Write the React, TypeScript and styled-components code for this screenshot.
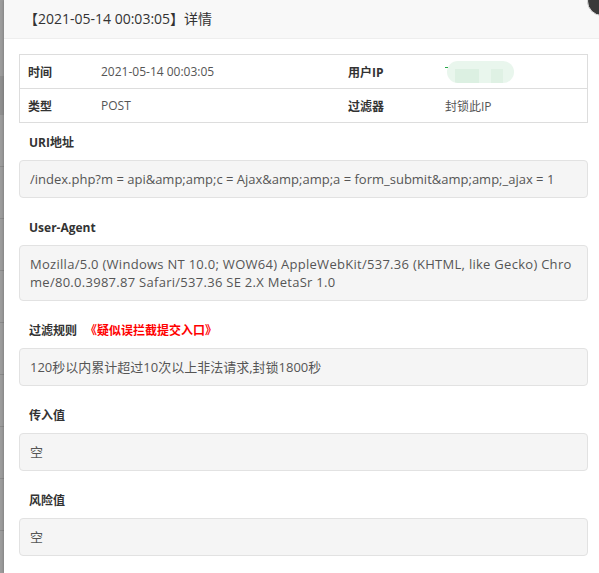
import React from 'react'
import styled, { createGlobalStyle } from 'styled-components'

const GlobalStyle = createGlobalStyle`
  html, body {
    margin: 0;
    padding: 0;
    background: #fff;
    overflow: hidden;
  }
  body {
    font-family: "Open Sans", "Noto Sans CJK SC", sans-serif;
    color: #333;
  }
`

interface Field {
  label: string
  note?: string
  value: string
  tracking?: number
}

const fields: Field[] = [
  {
    label: 'URI地址',
    value: '/index.php?m = api&amp;amp;c = Ajax&amp;amp;a = form_submit&amp;amp;_ajax = 1',
  },
  {
    label: 'User-Agent',
    value:
      'Mozilla/5.0 (Windows NT 10.0; WOW64) AppleWebKit/537.36 (KHTML, like Gecko) Chrome/80.0.3987.87 Safari/537.36 SE 2.X MetaSr 1.0',
    tracking: 0.28,
  },
  {
    label: '过滤规则',
    note: '《疑似误拦截提交入口》',
    value: '120秒以内累计超过10次以上非法请求,封锁1800秒',
  },
  { label: '传入值', value: '空' },
  { label: '风险值', value: '空' },
]

const App: React.FC = () => {
  return (
    <>
      <GlobalStyle />
      <Screen>
        <Backdrop />
        <Dialog>
          <TitleBar>【2021-05-14 00:03:05】详情</TitleBar>
          <CloseButton aria-label="close" />
          <Content>
            <InfoTable>
              <InfoRow>
                <Cell $bold>时间</Cell>
                <Cell>2021-05-14 00:03:05</Cell>
                <Cell $bold>用户IP</Cell>
                <Cell>
                  <MaskedIp />
                </Cell>
              </InfoRow>
              <InfoRow $last>
                <Cell $bold>类型</Cell>
                <Cell>POST</Cell>
                <Cell $bold>过滤器</Cell>
                <Cell>封锁此IP</Cell>
              </InfoRow>
            </InfoTable>
            <Fields>
              {fields.map((f) => (
                <div key={f.label}>
                  <FieldLabel>
                    {f.label}
                    {f.note && <Note>{f.note}</Note>}
                  </FieldLabel>
                  <ValueBox $tracking={f.tracking}>{f.value}</ValueBox>
                </div>
              ))}
            </Fields>
          </Content>
        </Dialog>
      </Screen>
    </>
  )
}

export default App

const Screen = styled.div`
  display: flex;
  width: 599px;
  height: 573px;
  overflow: hidden;
`

const Backdrop = styled.div`
  flex: 0 0 4px;
  background:
    linear-gradient(#8f8f8f, #8f8f8f) 0 76px / 100% 39px no-repeat,
    repeating-linear-gradient(
      to bottom,
      #9c9c9c 0,
      #9c9c9c 51px,
      #8a8a8a 51px,
      #8a8a8a 52px
    ) 0 115px / 100% 100% no-repeat,
    #9c9c9c;
`

const Dialog = styled.div`
  position: relative;
  flex: 1;
  background: #fff;
  box-shadow: -1px 0 2px rgba(0, 0, 0, 0.15);
`

const TitleBar = styled.div`
  height: 38px;
  line-height: 38px;
  padding-left: 20px;
  background: #f8f8f8;
  border-bottom: 1px solid #eee;
  font-size: 14px;
  color: #333;
`

const CloseButton = styled.span`
  position: absolute;
  top: -14px;
  right: -18px;
  width: 28px;
  height: 28px;
  border-radius: 50%;
  background: #3a3a3a;
  border: 1px solid #ddd;
`

const Content = styled.div`
  padding: 15px 11px 15px 15px;
`

const InfoTable = styled.div`
  border: 1px solid #ddd;
`

const InfoRow = styled.div<{ $last?: boolean }>`
  display: grid;
  grid-template-columns: 73px 247px 97px 1fr;
  height: 33px;
  align-items: center;
  border-bottom: ${(p) => (p.$last ? 'none' : '1px solid #ddd')};
`

const Cell = styled.div<{ $bold?: boolean }>`
  padding-left: 8px;
  font-size: 12px;
  font-weight: ${(p) => (p.$bold ? 700 : 400)};
  color: ${(p) => (p.$bold ? '#333' : '#555')};
  white-space: nowrap;
`

const MaskedIp = styled.span`
  position: relative;
  display: inline-block;
  vertical-align: middle;
  width: 67px;
  height: 22px;
  margin-left: 2px;
  border-radius: 11px;
  background:
    linear-gradient(90deg, transparent 0 8px, #dcf0e2 8px 32px, transparent 32px 44px, #dff1e4 44px 56px, transparent 56px) 0 8px / 100% 14px no-repeat,
    #e9f6ed;

  &::before {
    content: '';
    position: absolute;
    left: -2px;
    top: 6px;
    width: 3px;
    height: 1px;
    background: #2aa84a;
  }
`

const Fields = styled.div`
  display: flex;
  flex-direction: column;
  gap: 20px;
  margin-top: 10px;
`

const FieldLabel = styled.div`
  height: 20px;
  line-height: 20px;
  margin-bottom: 7px;
  padding-left: 10px;
  font-size: 12px;
  font-weight: 700;
  color: #333;
`

const Note = styled.span`
  margin-left: 8px;
  color: #f00;
`

const ValueBox = styled.div<{ $tracking?: number }>`
  padding: 9px 10px;
  line-height: 18px;
  font-size: 13px;
  letter-spacing: ${(p) => p.$tracking ?? 0}px;
  color: #555;
  background: #f5f5f5;
  border: 1px solid #e2e2e2;
  border-radius: 4px;
  word-break: break-all;
`
